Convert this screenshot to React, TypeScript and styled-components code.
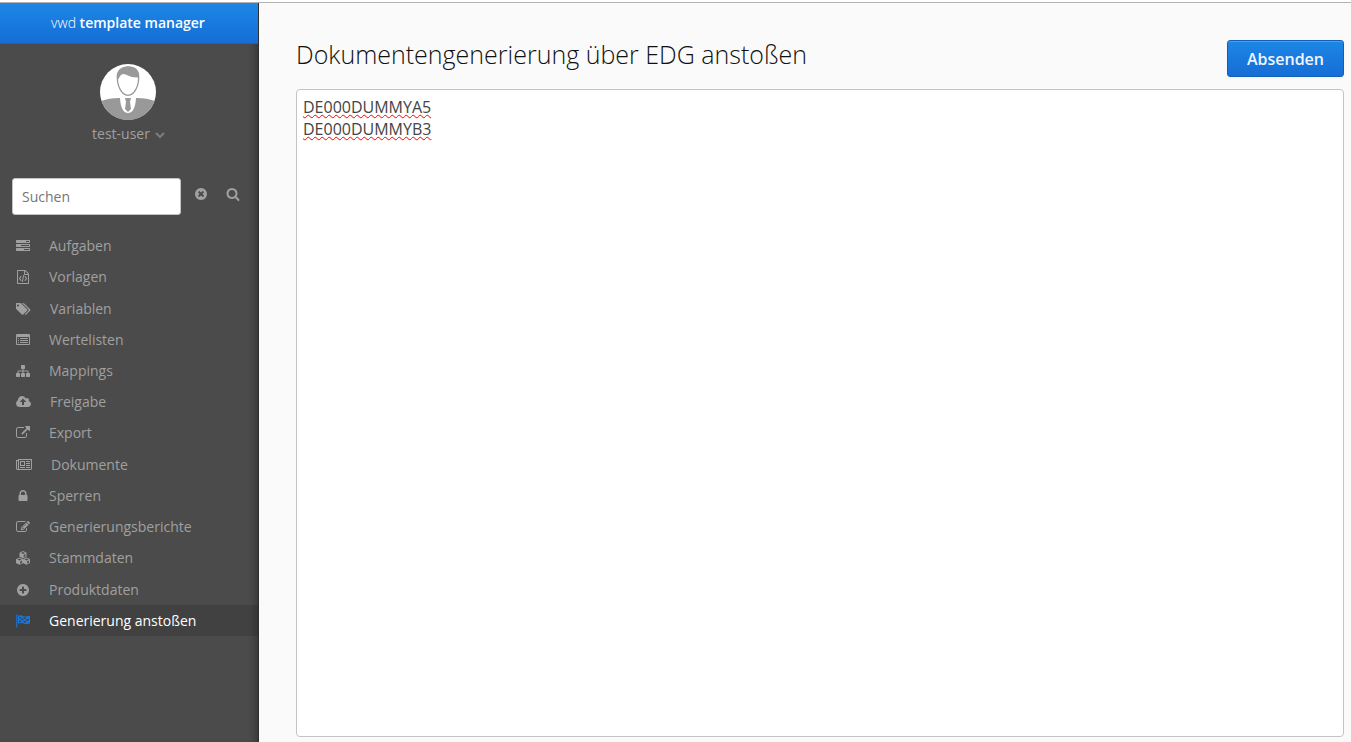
import React, { useState } from "react";
import styled, { createGlobalStyle, css } from "styled-components";

const GlobalStyle = createGlobalStyle`
  *, *::before, *::after { box-sizing: border-box; }
  body {
    margin: 0;
    background: #fafafa;
    color: #444;
    font-family: "Open Sans", "Noto Sans", sans-serif;
    font-size: 14px;
    line-height: 20px;
  }
  button, input, textarea { font: inherit; }
`;

const Page = styled.div`
  display: flex;
  min-height: 100vh;
  border-top: 2px solid #fff;
`;

const Shell = styled.div`
  display: flex;
  flex: 1;
  border-top: 1px solid #b3b1b3;
`;

const Sidebar = styled.aside`
  flex: 0 0 259px;
  background: #4b4b4b;
  color: #a0a0a0;
  border-right: 1px solid #2e2e2e;
  box-shadow: inset -8px 0 8px -6px rgba(0, 0, 0, 0.3);
`;

const Brand = styled.a`
  display: block;
  height: 41px;
  padding-top: 10px;
  padding-right: 2px;
  background: linear-gradient(#1c87e5, #166dd6);
  border-bottom: 1px solid #1464c0;
  color: #fff;
  font-weight: 300;
  text-align: center;
  text-decoration: none;
  strong { font-weight: 600; }
`;

const Profile = styled.div`
  display: flex;
  flex-direction: column;
  align-items: center;
  padding: 20px 2px 0 0;
`;

const Avatar = styled.svg`
  display: block;
  width: 56px;
  height: 56px;
`;

const UserButton = styled.button`
  display: flex;
  align-items: center;
  gap: 5px;
  margin-top: 4px;
  padding: 0 0 0 1px;
  border: 0;
  background: none;
  color: #a0a0a0;
  svg { margin-top: 3px; }
`;

const Search = styled.form`
  display: flex;
  align-items: center;
  padding: 34px 12px 0;
`;

const SearchInput = styled.input`
  width: 169px;
  height: 37px;
  padding: 0 9px;
  border: 1px solid #c4c4c4;
  border-radius: 3px;
  background: #fff;
  color: #444;
  &::placeholder { color: #757575; opacity: 1; }
`;

const IconButton = styled.button`
  display: flex;
  padding: 0;
  margin: 0 0 5px 13px;
  border: 0;
  background: none;
  color: #a0a0a0;
  & + & { margin-left: 18px; }
`;

const Menu = styled.ul`
  display: grid;
  grid-auto-rows: 1fr;
  height: 406px;
  list-style: none;
  margin: 15px 0 0;
  padding: 0;
`;

const MenuLink = styled.a<{ $active?: boolean }>`
  display: flex;
  align-items: center;
  gap: 19px;
  height: 100%;
  padding: 1px 0 0 16px;
  color: #a0a0a0;
  text-decoration: none;
  ${(p) =>
    p.$active &&
    css`
      background: rgba(0, 0, 0, 0.12);
      color: #fff;
      svg { color: #1c75d4; }
    `}
`;

const Glyph = styled.svg`
  display: block;
  flex: none;
  height: 14px;
  fill: currentColor;
`;

const Main = styled.main`
  flex: 1;
  display: flex;
  flex-direction: column;
  min-width: 0;
  padding: 37px 7px 5px 37px;
`;

const Header = styled.header`
  display: flex;
  justify-content: space-between;
  align-items: flex-start;
  margin-bottom: 12px;
`;

const Title = styled.h1`
  margin: 0;
  color: #111;
  font-size: 25px;
  font-weight: 300;
  line-height: 28px;
`;

const Submit = styled.button`
  height: 37px;
  padding: 0 19px;
  border: 1px solid #145fb5;
  border-radius: 3px;
  background: linear-gradient(#1c87e5, #166dd6);
  box-shadow: inset 0 1px 0 rgba(255, 255, 255, 0.2), 0 1px 2px rgba(0, 0, 0, 0.05);
  color: #f0f6ff;
  font-size: 16px;
  font-weight: 600;
`;

const Editor = styled.textarea`
  flex: 1;
  width: 100%;
  padding: 6px;
  border: 1px solid #c4c4c4;
  border-radius: 4px;
  background: #fff;
  color: #444;
  font-size: 16px;
  line-height: 22px;
  resize: none;
  outline: none;
  text-decoration: underline wavy #f00 1px;
  text-underline-offset: 1px;
  text-decoration-skip-ink: none;
`;

const disc =
  "zM1664 896q0 209-103 385.5t-279.5 279.5-385.5 103-385.5-103-279.5-279.5-103-385.5 103-385.5 279.5-279.5 385.5-103 385.5 103 279.5 279.5 103 385.5z";
const box = (x: number, y: number, w: number) =>
  `M${x} ${y}h${w}q32 0 32 32v64q0 32-32 32h-${w}q-32 0-32-32v-64q0-32 32-32z`;
const cube = (x: number, y: number) =>
  `M${x} ${y}l400 190q50 30 50 90v380q0 60-50 90l-400 190-400-190q-50-30-50-90v-380q0-60 50-90zM${x} ${y + 130}l-260 120 260 120 260-120zM${x + 80} ${y + 500}v300l230-115v-290z`;

type IconDef = { w: number; d: string };

const icons: Record<string, IconDef> = {
  tasks: { w: 14, d: "M1024 1408h640v-128h-640v128zm-384-512h1024v-128h-1024v128zm640-512h384v-128h-384v128zm512 832v256q0 26-19 45t-45 19h-1664q-26 0-45-19t-19-45v-256q0-26 19-45t45-19h1664q26 0 45 19t19 45zm0-512v256q0 26-19 45t-45 19h-1664q-26 0-45-19t-19-45v-256q0-26 19-45t45-19h1664q26 0 45 19t19 45zm0-512v256q0 26-19 45t-45 19h-1664q-26 0-45-19t-19-45v-256q0-26 19-45t45-19h1664q26 0 45 19t19 45z" },
  code: { w: 14, d: "M1596 380q28 28 48 76t20 88v1152q0 40-28 68t-68 28h-1344q-40 0-68-28t-28-68v-1600q0-40 28-68t68-28h896q40 0 88 20t76 48zm-444-244v376h376q-10-29-22-41l-313-313q-12-12-41-22zm384 1528v-1024h-416q-40 0-68-28t-28-68v-416h-768v1536h1280zm-928-896q8-11 21-12.5t24 6.5l51 38q11 8 12.5 21t-6.5 24l-182 243 182 243q8 11 6.5 24t-12.5 21l-51 38q-11 8-24 6.5t-21-12.5l-226-301q-14-19 0-38zm802 301q14 19 0 38l-226 301q-8 11-21 12.5t-24-6.5l-51-38q-11-8-12.5-21t6.5-24l182-243-182-243q-8-11-6.5-24t12.5-21l51-38q11-8 24-6.5t21 12.5zm-620 461q-13-2-20.5-13t-5.5-24l138-831q2-13 13-20.5t24-5.5l63 10q13 2 20.5 13t5.5 24l-138 831q-2 13-13 20.5t-24 5.5z" },
  tags: { w: 15, d: "M384 448q0-53-37.5-90.5t-90.5-37.5-90.5 37.5-37.5 90.5 37.5 90.5 90.5 37.5 90.5-37.5 37.5-90.5zm1067 576q0 53-37 90l-491 492q-39 37-91 37-53 0-90-37l-715-716q-38-37-64.5-101t-26.5-117v-416q0-52 38-90t90-38h416q53 0 117 26.5t102 64.5l715 714q37 39 37 91zm384 0q0 53-37 90l-491 492q-39 37-91 37-36 0-59-14t-53-45l470-470q37-37 37-90 0-52-37-91l-715-714q-38-38-102-64.5t-117-26.5h224q53 0 117 26.5t102 64.5l715 714q37 39 37 91z" },
  list: { w: 14, d: box(288, 1152, 64) + box(288, 896, 64) + box(288, 640, 64) + box(544, 1152, 960) + box(544, 896, 960) + box(544, 640, 960) + "M1664 1376v-832q0-13-9.5-22.5t-22.5-9.5h-1472q-13 0-22.5 9.5t-9.5 22.5v832q0 13 9.5 22.5t22.5 9.5h1472q13 0 22.5-9.5t9.5-22.5zm128-1088v1088q0 66-47 113t-113 47h-1472q-66 0-113-47t-47-113v-1088q0-66 47-113t113-47h1472q66 0 113 47t47 113z" },
  sitemap: { w: 14, d: "M1792 1248v320q0 40-28 68t-68 28h-320q-40 0-68-28t-28-68v-320q0-40 28-68t68-28h96v-192h-512v192h96q40 0 68 28t28 68v320q0 40-28 68t-68 28h-320q-40 0-68-28t-28-68v-320q0-40 28-68t68-28h96v-192h-512v192h96q40 0 68 28t28 68v320q0 40-28 68t-68 28h-320q-40 0-68-28t-28-68v-320q0-40 28-68t68-28h96v-192q0-52 38-90t90-38h512v-192h-96q-40 0-68-28t-28-68v-320q0-40 28-68t68-28h320q40 0 68 28t28 68v320q0 40-28 68t-68 28h-96v192h512q52 0 90 38t38 90v192h96q40 0 68 28t28 68z" },
  cloud: { w: 15, d: "M1280 864q0-14-9-23l-352-352q-9-9-23-9t-23 9l-351 351q-10 12-10 24 0 14 9 23t23 9h224v352q0 13 9.5 22.5t22.5 9.5h192q13 0 22.5-9.5t9.5-22.5v-352h224q13 0 22.5-9.5t9.5-22.5zm640 288q0 159-112.5 271.5t-271.5 112.5h-1088q-185 0-316.5-131.5t-131.5-316.5q0-130 70-240t188-165q-2-30-2-43 0-212 150-362t362-150q156 0 285.5 87t188.5 231q71-62 166-62 106 0 181 75t75 181q0 76-41 138 130 31 213.5 135.5t83.5 238.5z" },
  external: { w: 14, d: "M1408 928v320q0 119-84.5 203.5t-203.5 84.5h-832q-119 0-203.5-84.5t-84.5-203.5v-832q0-119 84.5-203.5t203.5-84.5h704q14 0 23 9t9 23v64q0 14-9 23t-23 9h-704q-66 0-113 47t-47 113v832q0 66 47 113t113 47h832q66 0 113-47t47-113v-320q0-14 9-23t23-9h64q14 0 23 9t9 23zm384-864v512q0 26-19 45t-45 19-45-19l-176-176-652 652q-10 10-23 10t-23-10l-114-114q-10-10-10-23t10-23l652-652-176-176q-19-19-19-45t19-45 45-19h512q26 0 45 19t19 45z" },
  news: { w: 16, d: "M1024 512h-384v384h384v-384zm128 640v128h-640v-128h640zm0-768v640h-640v-640h640zm640 768v128h-512v-128h512zm0-256v128h-512v-128h512zm0-256v128h-512v-128h512zm0-256v128h-512v-128h512zm-1536 960v-960h-128v960q0 26 19 45t45 19 45-19 19-45zm1664 0v-1088h-1536v1088q0 33-11 64h1483q26 0 45-19t19-45zm128-1216v1216q0 80-56 136t-136 56h-1664q-80 0-136-56t-56-136v-1088h256v-128h1792z" },
  lock: { w: 14, d: "M640 768h512v-192q0-106-75-181t-181-75-181 75-75 181v192zm832 96v576q0 40-28 68t-68 28h-960q-40 0-68-28t-28-68v-576q0-40 28-68t68-28h32v-192q0-184 132-316t316-132 316 132 132 316v192h32q40 0 68 28t28 68z" },
  edit: { w: 14, d: "M888 1184l116-116-152-152-116 116v56h96v96h56zm440-720q-16-16-33 1l-350 350q-17 17-1 33t33-1l350-350q17-17 1-33zm80 594v190q0 119-84.5 203.5t-203.5 84.5h-832q-119 0-203.5-84.5t-84.5-203.5v-832q0-119 84.5-203.5t203.5-84.5h832q63 0 117 25 15 7 18 23 3 17-9 29l-49 49q-14 14-32 8-23-6-45-6h-832q-66 0-113 47t-47 113v832q0 66 47 113t113 47h832q66 0 113-47t47-113v-126q0-13 9-22l64-64q15-15 35-7t20 29zm-96-738l288 288-672 672h-288v-288zm444 132l-92 92-288-288 92-92q28-28 68-28t68 28l152 152q28 28 28 68t-28 68z" },
  cubes: { w: 14, d: cube(896, 0) + cube(450, 830) + cube(1342, 830) },
  plus: { w: 14, d: "M1344 960v-128q0-26-19-45t-45-19h-256v-256q0-26-19-45t-45-19h-128q-26 0-45 19t-19 45v256h-256q-26 0-45 19t-19 45v128q0 26 19 45t45 19h256v256q0 26 19 45t45 19h128q26 0 45-19t19-45v-256h256q26 0 45-19t19-45" + disc },
  flag: { w: 14, d: "M32 64H176V1728H32zM256 230Q560 60 900 240T1792 190V1180Q1300 1430 950 1230T256 1260zM400 420V600Q520 530 640 520V350Q520 350 400 420zM680 560V760Q800 750 930 810V620Q800 550 680 560zM980 400V600Q1110 660 1260 650V460Q1110 460 980 400zM1310 680V880Q1450 860 1620 790V600Q1450 670 1310 680zM400 880V1080Q520 1010 640 1000V810Q520 810 400 880zM980 860V1060Q1110 1120 1260 1110V910Q1110 920 980 860z" },
  clear: { w: 14, d: "M1277 1122q0-26-19-45l-181-181 181-181q19-19 19-45 0-27-19-46l-90-90q-19-19-46-19-26 0-45 19l-181 181-181-181q-19-19-45-19-27 0-46 19l-90 90q-19 19-19 46 0 26 19 45l181 181-181 181q-19 19-19 45 0 27 19 46l90 90q19 19 46 19 26 0 45-19l181-181 181 181q19 19 45 19 27 0 46-19l90-90q19-19 19-46" + disc },
  search: { w: 14, d: "M1216 832q0-185-131.5-316.5t-316.5-131.5-316.5 131.5-131.5 316.5 131.5 316.5 316.5 131.5 316.5-131.5 131.5-316.5zm512 832q0 52-38 90t-90 38q-54 0-90-38l-343-342q-179 124-399 124-143 0-273.5-55.5t-225-150-150-225-55.5-273.5 55.5-273.5 150-225 225-150 273.5-55.5 273.5 55.5 225 150 150 225 55.5 273.5q0 220-124 399l343 343q37 37 37 90z" },
};

const Icon = ({ name }: { name: string }) => (
  <Glyph width={icons[name].w} viewBox={`0 0 ${icons[name].w * 128} 1792`} aria-hidden="true">
    <path fillRule="evenodd" d={icons[name].d} />
  </Glyph>
);

const entries = [
  ["tasks", "Aufgaben"],
  ["code", "Vorlagen"],
  ["tags", "Variablen"],
  ["list", "Wertelisten"],
  ["sitemap", "Mappings"],
  ["cloud", "Freigabe"],
  ["external", "Export"],
  ["news", "Dokumente"],
  ["lock", "Sperren"],
  ["edit", "Generierungsberichte"],
  ["cubes", "Stammdaten"],
  ["plus", "Produktdaten"],
  ["flag", "Generierung anstoßen"],
];

export default function App() {
  const [query, setQuery] = useState("");
  const [ids, setIds] = useState("DE000DUMMYA5\nDE000DUMMYB3");
  return (
    <Page>
      <GlobalStyle />
      <Shell>
        <Sidebar>
          <Brand href="#">
            vwd <strong>template manager</strong>
          </Brand>
          <Profile>
            <Avatar viewBox="0 0 56 56" aria-hidden="true">
              <circle cx="28" cy="28" r="28" fill="#fff" />
              <path d="M1.500 37Q8 34 20 34Q21 49 28 49Q35 49 36 34Q48 34 54.500 37A28 28 0 0 1 1.500 37z" fill="#999" />
              <path d="M25 34h6l-1 4 1 7-3 3-3-3 1-7z" fill="#999" />
              <path d="M17.300 13C17.300 6 22 3 28 3S38.700 6 38.700 13C38.700 23 34 31.300 28 31.300S17.300 23 17.300 13z" fill="#fff" stroke="#999" strokeWidth="1.300" />
              <path d="M17 14C16.500 6 22 2.500 28 2.500S39.500 6 39 13.500Q32 14 28 11.500T21.500 10.500Q19.500 12 18.500 15z" fill="#999" />
            </Avatar>
            <UserButton type="button">
              test-user
              <svg width="10" height="7" viewBox="0 0 10 7" aria-hidden="true">
                <path d="M1 1L5 5L9 1" fill="none" stroke="#7c7c7c" strokeWidth="2.200" />
              </svg>
            </UserButton>
          </Profile>
          <Search onSubmit={(e) => e.preventDefault()}>
            <SearchInput aria-label="Suchen" placeholder="Suchen" value={query} onChange={(e) => setQuery(e.target.value)} />
            <IconButton type="button" aria-label="Suche leeren" onClick={() => setQuery("")}>
              <Icon name="clear" />
            </IconButton>
            <IconButton type="submit" aria-label="Suche starten">
              <Icon name="search" />
            </IconButton>
          </Search>
          <nav>
            <Menu>
              {entries.map(([icon, label], i) => (
                <li key={label}>
                  <MenuLink href="#" $active={i === entries.length - 1}>
                    <Icon name={icon} />
                    {label}
                  </MenuLink>
                </li>
              ))}
            </Menu>
          </nav>
        </Sidebar>
        <Main>
          <Header>
            <Title id="page-title">Dokumentengenerierung über EDG anstoßen</Title>
            <Submit type="button">Absenden</Submit>
          </Header>
          <Editor aria-labelledby="page-title" spellCheck={false} value={ids} onChange={(e) => setIds(e.target.value)} />
        </Main>
      </Shell>
    </Page>
  );
}
